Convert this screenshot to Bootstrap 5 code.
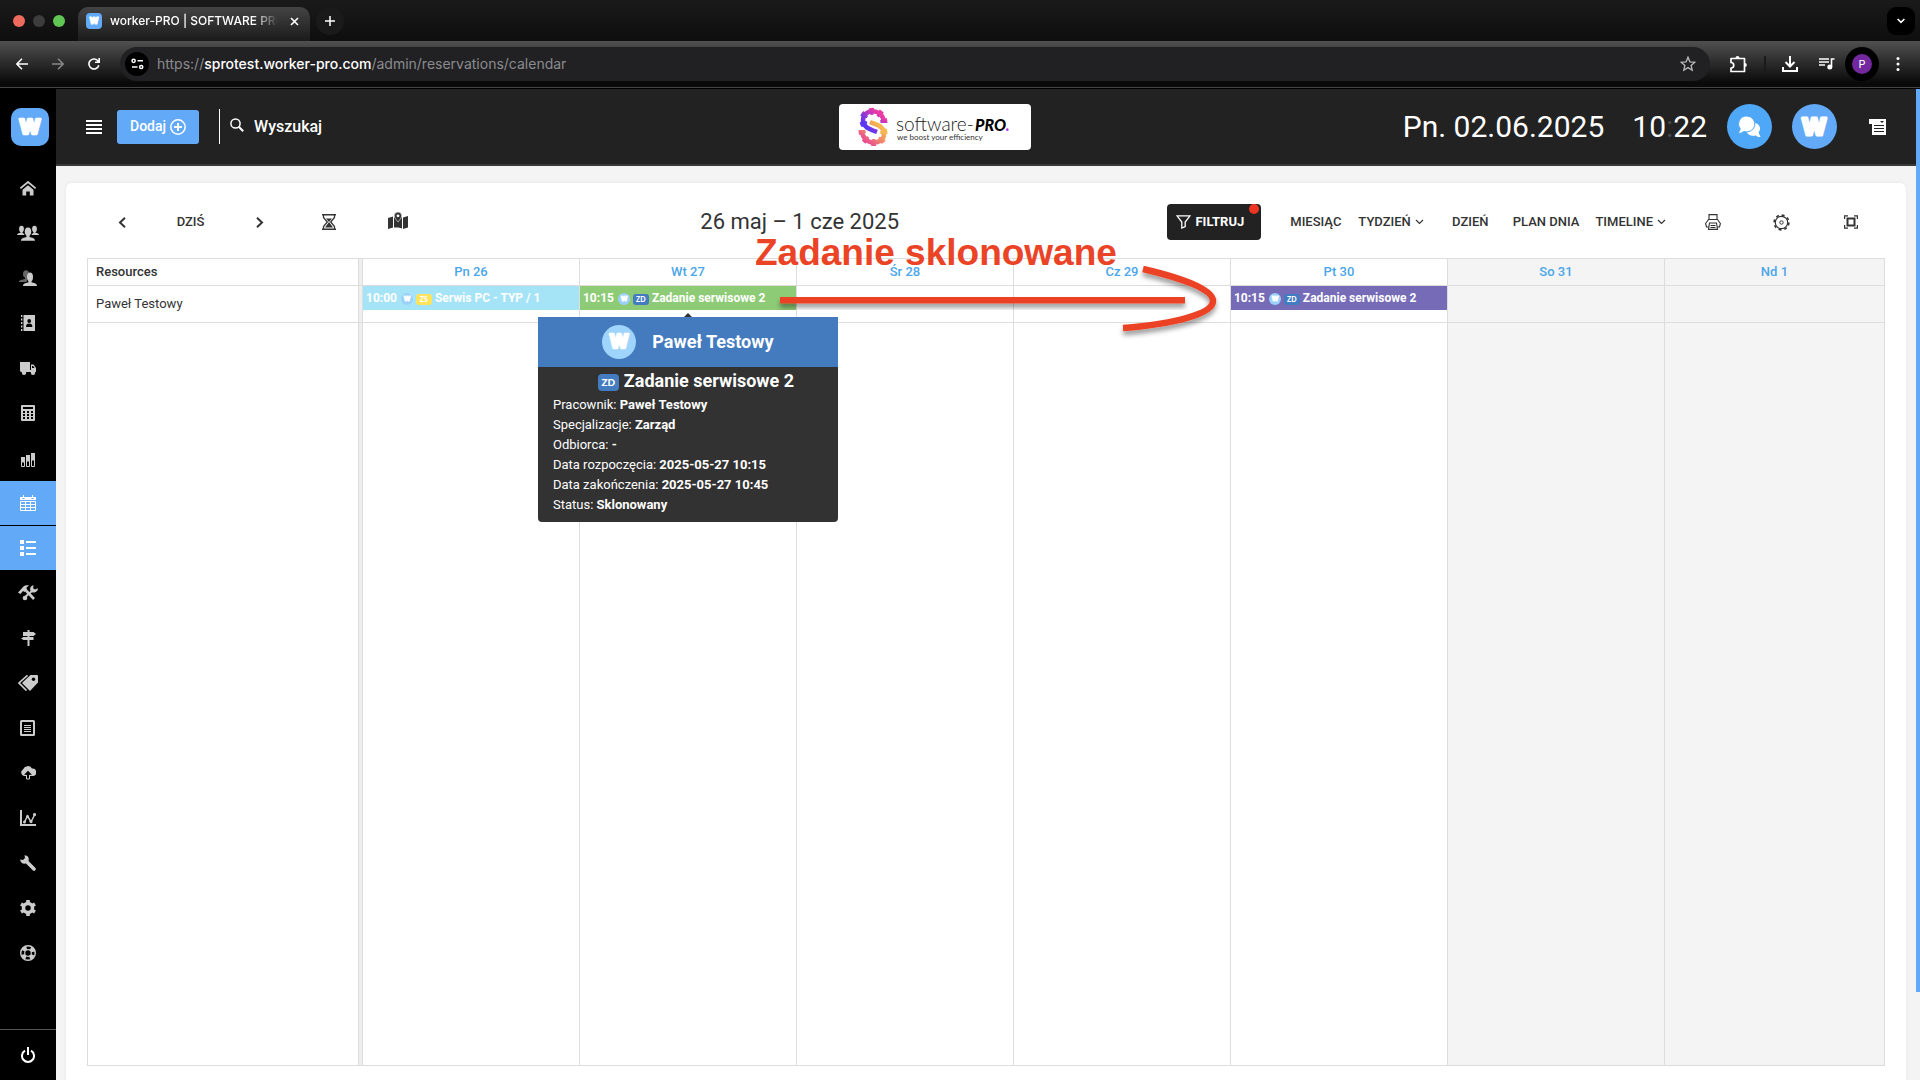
<!DOCTYPE html>
<html lang="pl">
<head>
<meta charset="utf-8">
<meta name="viewport" content="width=device-width, initial-scale=1">
<title>worker-PRO | SOFTWARE PRO</title>
<link rel="stylesheet" href="https://cdn.jsdelivr.net/npm/bootstrap@5.3.0/dist/css/bootstrap.min.css">
<style>
:root { --blue: #62a9f8; --dark: #222; --line: #ddd; }
body { font-family: Roboto, "Liberation Sans", sans-serif; font-size: 13px; line-height: 20px; color: #333; background: #f4f4f4; overflow: hidden; }
button { font: inherit; color: inherit; background: none; border: 0; padding: 0; }
svg { display: block; flex: none; }
a { text-decoration: none; color: inherit; }

/* browser window */
.browser { font-family: Inter, "Liberation Sans", sans-serif; color: #fff; background: #000; }
.tab-strip { height: 41px; background: linear-gradient(#1a1a1a, #0e0e0e); padding: 0 5px 0 13px; }
.light { width: 12px; height: 12px; border-radius: 50%; }
.light-close { background: #ec6a5e; }
.light-min { background: #3d3d3d; }
.light-max { background: #61c554; }
.browser-tab { width: 232px; height: 34px; margin-left: 13px; padding: 0 11px 6px 8px; border-radius: 10px 10px 0 0; background: linear-gradient(#444, #1b1b1b); }
.tab-title { font-size: 12px; font-weight: 500; white-space: nowrap; overflow: hidden; width: 168px; margin-left: 8px; -webkit-mask-image: linear-gradient(90deg, #000 85%, transparent); mask-image: linear-gradient(90deg, #000 85%, transparent); }
.new-tab { width: 28px; height: 28px; margin-left: 6px; border-radius: 50%; background: #1a1a1a; }
.tab-menu { width: 28px; height: 28px; border-radius: 9px; background: #000; }
.tool-strip { height: 48px; padding: 0 20px 2px 16px; background: linear-gradient(#505050, #090909 90%); border-bottom: 1px solid #000; box-shadow: inset 0 -1px #444, inset 0 -4px #0a0a0a; }
.address { height: 34px; border-radius: 17px; background: #212124; padding: 0 14px 0 5px; margin: 0 19px 0 20px; }
.site-info { width: 24px; height: 24px; border-radius: 50%; background: #000; }
.url { font-size: 14px; color: #8b8b8e; margin-left: 8px; white-space: nowrap; }
.url b { color: #fff; font-weight: 500; }
.tool-rule { width: 2px; height: 16px; background: #1b1b1b; margin: 0 16px 0 17px; }
.media { margin: 0 10px 0 21px; }
.profile { width: 34px; height: 34px; border-radius: 50%; background: #000; margin-right: 17px; }
.profile span { width: 20px; height: 20px; border-radius: 50%; background: #7428a0; font-size: 11px; }

/* side navigation */
.side { width: 56px; background: #000; color: #ccc; }
.side-logo { height: 77px; padding: 0 0 1px 4px; }
.side-logo svg { border-radius: 10px; }
.side-link { height: 44px; margin-bottom: 1px; display: flex; align-items: center; justify-content: center; }
.side-link.active { background: var(--blue); color: #fff; }
.side-exit { height: 51px; border-top: 1px solid #555; color: #fff; }
.w-tile { background: var(--blue); color: #fff; }

/* page header */
.top-head { height: 77px; background: var(--dark); border-bottom: 2px solid #393739; color: #fff; padding: 0 30px; }
.btn-add { --bs-btn-bg: #62a9f8; --bs-btn-hover-bg: #5199e8; --bs-btn-color: #fff; --bs-btn-hover-color: #fff; height: 34px; padding: 0 12px; font-size: 14px; font-weight: 500; border-radius: 3px; margin-left: 15px; }
.search-box { border-left: 1px solid #fff; height: 35px; padding-left: 10px; margin-left: 20px; }
.search-box input { width: 214px; margin-left: 10px; padding: 0; border: 0; background: none; color: #fff; font-size: 16px; font-weight: 500; outline: 0; }
.search-box input::placeholder { color: #fff; opacity: 1; }
.brand-pill { width: 192px; height: 46px; border-radius: 4px; background: #fff; }
.clock { font-size: 30px; line-height: 40px; }
.clock i { color: #484848; font-style: normal; }
.round { width: 45px; height: 45px; border-radius: 50%; margin-left: 20px; }
.chat { background: #4fa7f8; }
.thumb { width: 4px; height: 903px; right: 0; top: 0; background: var(--blue); z-index: 5; }

/* calendar */
.content { padding: 17px 10px 0; }
.panel { background: #fff; border-radius: 6px 6px 0 0; padding: 21px 21px 14px; box-shadow: 0 0 4px rgba(0,0,0,.06); }
.cal-bar { height: 36px; margin-bottom: 18px; font-weight: 500; }
.cal-btn { min-width: 69px; height: 36px; padding: 0 8px; display: flex; align-items: center; justify-content: center; gap: 4px; font-weight: 500; }
.cal-btn.has-menu { padding-right: 12px; }
.cal-title { font-size: 22px; line-height: 30px; font-weight: 400; margin: 0; }
.btn-filter { width: 94px; height: 36px; border-radius: 4px; background: var(--dark); color: #fff; font-weight: 700; gap: 4px; padding-right: 8px; margin-right: 20px; }
.btn-filter .dot { width: 10px; height: 10px; border-radius: 50%; background: #ee3524; top: 0; right: 2px; }
.cal-grid { table-layout: fixed; color: #333; border-color: var(--line); height: 100%; }
.cal-grid > :not(caption) > * > * { padding: 0; border: 1px solid var(--line); background: none; box-shadow: none; }
.cal-grid thead tr { height: 27px; }
.cal-grid th { font-weight: 500; line-height: 20px; vertical-align: middle; text-align: center; color: #4ba6ea; }
.cal-grid > :not(caption) > tr > .res { text-align: left; padding-left: 8px; color: #333; vertical-align: middle; }
.cal-grid > :not(caption) > tr > .split { background: #eee; }
.cal-grid > :not(caption) > tr > .off { background: #f4f4f4; }
.col-res { width: 271px; }
.col-split { width: 4px; }
.col-tail { width: 3px; }
.row-person { height: 37px; }
.event { height: 24px; padding: 0 3px 1px; font-size: 12px; font-weight: 700; color: #fff; white-space: nowrap; display: flex; align-items: center; }
.event-sky { background: #a5e4f7; }
.event-green { background: #8ecb76; }
.event-violet { background: #756bb7; }
.event .avatar { width: 12px; height: 12px; margin: 3px 3px 0 4px; border-radius: 50%; background: #9bd0fb; }
.code { border-radius: 4px; background: #437cc0; font-family: Lato, sans-serif; font-weight: 900; color: #fff; display: inline-flex; align-items: center; justify-content: center; }
.event .code { width: 16px; height: 11px; font-size: 7px; margin: 3px 3px 0 0; border-radius: 3px; }
.code-yellow { background: #fbe35b; }
.tip { top: 31px; left: 50%; width: 300px; margin-left: -150px; background: #323232; color: #fff; border-radius: 4px; z-index: 3; font-size: 13px; line-height: 20px; }
.tip::before { content: ""; position: absolute; top: -4px; left: 146px; border: 4px solid transparent; border-top: 0; border-bottom-color: #323232; }
.tip-head { height: 50px; background: #437bbe; font-size: 18px; font-weight: 700; gap: 16px; }
.tip-head .avatar { width: 34px; height: 34px; border-radius: 50%; background: #9fd4fc; }
.tip-name { font-size: 18px; font-weight: 700; line-height: 28px; gap: 5px; }
.tip-name .code { width: 21px; height: 17px; font-size: 10px; margin-top: 2px; }
.tip-body { padding: 0 15px 7px; }
.note { left: 669px; top: -30px; z-index: 4; }
</style>
</head>
<body class="vh-100 d-flex flex-column">
<svg width="0" height="0" class="position-absolute" aria-hidden="true">
  <symbol id="w" viewBox="0 0 32 32"><text x="16" y="22" text-anchor="middle" font-family="Inter" font-size="17" font-weight="800" fill="#fff" stroke="#fff" stroke-width="2.2" stroke-linejoin="round">W</text></symbol>
</svg>

<header class="browser">
  <div class="tab-strip d-flex align-items-end">
    <div class="d-flex align-self-center gap-2">
      <span class="light light-close"></span><span class="light light-min"></span><span class="light light-max"></span>
    </div>
    <div class="browser-tab d-flex align-items-center">
      <svg class="w-tile rounded-1" width="16" height="16"><use href="#w"/></svg>
      <span class="tab-title">worker-PRO | SOFTWARE PRO</span>
      <button class="ms-auto" aria-label="Zamknij kartę"><svg width="9" height="9" viewBox="0 0 9 9" stroke="#fff" stroke-width="1.6"><path d="M1 1l7 7M8 1L1 8"/></svg></button>
    </div>
    <button class="new-tab d-flex align-items-center justify-content-center align-self-center" aria-label="Nowa karta"><svg width="10" height="10" viewBox="0 0 10 10" stroke="#fff" stroke-width="1.5"><path d="M5 0v10M0 5h10"/></svg></button>
    <button class="tab-menu d-flex align-items-center justify-content-center align-self-center ms-auto" aria-label="Karty"><svg width="8" height="6" viewBox="0 0 8 6" fill="none" stroke="#fff" stroke-width="1.6"><path d="M.6 1L4 4.4 7.4 1"/></svg></button>
  </div>
  <div class="tool-strip d-flex align-items-center">
    <button aria-label="Wstecz"><svg width="12" height="12" viewBox="0 0 12 12" fill="none" stroke="#fff" stroke-width="1.5"><path d="M12 6H1M6 .8L.9 6 6 11.2"/></svg></button>
    <button class="ms-4" aria-label="Dalej"><svg width="12" height="12" viewBox="0 0 12 12" fill="none" stroke="#888" stroke-width="1.5"><path d="M0 6h11M6 .8L11.1 6 6 11.2"/></svg></button>
    <button class="ms-4" aria-label="Odśwież"><svg width="12" height="12" viewBox="0 0 12 12" fill="none" stroke="#fff" stroke-width="1.6"><path d="M10.8 7.2A5 5 0 1 1 9.6 2.5L11 4M11.2 0v4.2H7"/></svg></button>
    <div class="address d-flex align-items-center flex-grow-1">
      <span class="site-info d-flex align-items-center justify-content-center"><svg width="13" height="12" viewBox="0 0 13 12" fill="none" stroke="#fff" stroke-width="1.5"><circle cx="2.6" cy="2.8" r="1.6"/><path d="M6.5 2.8H12M1 9h5.5"/><circle cx="10.2" cy="9" r="1.6"/></svg></span>
      <span class="url flex-grow-1">https://<b>sprotest.worker-pro.com</b>/admin/reservations/calendar</span>
      <button aria-label="Zakładka"><svg width="16" height="16" viewBox="0 0 16 16" fill="none" stroke="#bbb" stroke-width="1.3"><path d="M8 1.2l1.9 4.6 4.9.4-3.7 3.2 1.1 4.8L8 11.6l-4.2 2.6 1.1-4.8L1.2 6.2l4.9-.4z"/></svg></button>
    </div>
    <button aria-label="Rozszerzenia"><svg width="18" height="18" viewBox="0 0 18 18"><path d="M2 3.500h13.500v13H2v-3.500a2.700 2.700 0 0 0 0-5.500z" fill="none" stroke="#fff" stroke-width="1.700" stroke-linejoin="round"/><path d="M6.500 3a2 2 0 0 1 4 0zM15.800 8a2 2 0 0 1 0 4z" fill="#fff"/></svg></button>
    <span class="tool-rule"></span>
    <button aria-label="Pobrane"><svg width="16" height="16" viewBox="0 0 16 16" fill="none" stroke="#fff" stroke-width="2"><path d="M8 0v10M3.500 6L8 10.500 12.500 6M1 11v4h14v-4"/></svg></button>
    <button class="media" aria-label="Multimedia"><svg width="16" height="14" viewBox="0 0 16 14"><path d="M0 2h10M0 5h10M0 8h6M12.500 10V2H15.500" fill="none" stroke="#fff" stroke-width="1.600"/><circle cx="10.800" cy="10" r="2.500" fill="#fff"/></svg></button>
    <button class="profile d-flex align-items-center justify-content-center"><span class="d-flex align-items-center justify-content-center">P</span></button>
    <button aria-label="Menu"><svg width="4" height="14" viewBox="0 0 4 14" fill="#fff"><circle cx="2" cy="1.600" r="1.500"/><circle cx="2" cy="7" r="1.500"/><circle cx="2" cy="12.400" r="1.500"/></svg></button>
  </div>
</header>

<div class="d-flex flex-grow-1 position-relative overflow-hidden">
  <nav class="side d-flex flex-column flex-shrink-0" aria-label="Menu główne">
    <a href="#" class="side-logo d-flex align-items-center justify-content-center" aria-label="worker-PRO"><svg class="w-tile" width="38" height="38"><use href="#w"/></svg></a>
    <a href="#" class="side-link" aria-label="Start"><svg width="16" height="15" viewBox="0 0 16 15" fill="currentColor"><path d="M8 4.200l5.500 4.600V14.500H9.800v-4H6.200v4H2.500V8.800z"/><path d="M.4 7.400L8 1l7.600 6.400" fill="none" stroke="currentColor" stroke-width="1.800"/></svg></a>
    <a href="#" class="side-link" aria-label="Klienci"><svg width="22" height="16" viewBox="0 0 22 16" fill="currentColor"><ellipse cx="4.500" cy="4" rx="2.400" ry="3.200"/><path d="M3.500 6h2v2l2 1v1H0c0-1.500 1.500-1.800 3.500-2.300z"/><ellipse cx="17.500" cy="4" rx="2.400" ry="3.200"/><path d="M18.500 6h-2v2l-2 1v1H22c0-1.500-1.500-1.800-3.500-2.300z"/><ellipse cx="11" cy="6.700" rx="3.800" ry="4.800" stroke="#000"/><path d="M9.500 10h3v2c2 .5 5.500 1 5.500 3.800H4C4 13 7.500 12.500 9.500 12z"/></svg></a>
    <a href="#" class="side-link" aria-label="Pracownicy"><svg width="18" height="16" viewBox="0 0 18 16" fill="currentColor"><g opacity=".5"><ellipse cx="7" cy="4" rx="3" ry="3.800"/><path d="M6 7h2v4l-1 1H0c0-2 3-2.500 6-3z"/></g><ellipse cx="11" cy="7" rx="3" ry="4.500"/><path d="M9.500 10h3v2.200c2 .6 5.500 1 5.500 3.800H4c0-2.800 3.500-3.200 5.500-3.800z"/></svg></a>
    <a href="#" class="side-link" aria-label="Kontakty"><svg width="14" height="16" viewBox="0 0 14 16" fill="currentColor"><path d="M2.500 0H14v16H2.500z"/><path d="M.7 0v16" stroke="currentColor" stroke-width="1.400" stroke-dasharray="2 1.500"/><circle cx="8.200" cy="6" r="1.900" fill="#000"/><path d="M5 12c0-2.500 1.200-3.400 3.200-3.400s3.200.9 3.200 3.400z" fill="#000"/></svg></a>
    <a href="#" class="side-link" aria-label="Flota"><svg width="16" height="13" viewBox="0 0 16 13" fill="currentColor"><path d="M0 0h10v10H1L0 9zM11 2.500h2.500L16 6v4h-5zM9 8h3v2H9z"/><circle cx="4" cy="10.700" r="2.200"/><circle cx="13" cy="10.700" r="2.200"/><path d="M12 4h1.200l1.300 2H12z" fill="#000"/></svg></a>
    <a href="#" class="side-link" aria-label="Kalkulator"><svg width="14" height="16" viewBox="0 0 14 16"><rect width="14" height="16" rx="1" fill="currentColor"/><path d="M2 3h10" stroke="#000" stroke-width="2"/><path d="M2 7h10M2 10h10M2 13h10" stroke="#000" stroke-width="2" stroke-dasharray="2 2"/></svg></a>
    <a href="#" class="side-link" aria-label="Raporty"><svg class="mt-1" width="14" height="14" viewBox="0 0 14 14"><path d="M0 4h4v5H0zM5 2h4v6H5zM10 0h4v7h-4z" fill="currentColor"/><path d="M.5 9h3v4.500h-3zM5.500 8h3v5.500h-3zM10.500 7h3v6.500h-3z" fill="none" stroke="currentColor"/></svg></a>
    <a href="#" class="side-link active" aria-label="Kalendarz"><svg width="16" height="16" viewBox="0 0 16 16"><path d="M0 2h16v3H0z" fill="#fff"/><path d="M3.500 0v4M12.500 0v4" stroke="#fff"/><path d="M2.500 3.500h2M11.500 3.500h2" stroke="#62a9f8"/><path d="M.5 6.500h15v9H.5zM0 9.500h16M0 12.500h16M5.500 6v10M10.500 6v10" fill="none" stroke="#fff"/></svg></a>
    <a href="#" class="side-link active" aria-label="Lista"><svg width="16" height="16" viewBox="0 0 16 16" fill="#fff"><path d="M0 0h4v4H0zM0 6h4v4H0zM0 12h4v4H0zM6 1h10v2H6zM6 7h10v2H6zM6 13h10v2H6z"/></svg></a>
    <a href="#" class="side-link" aria-label="Serwis"><svg width="20" height="16" viewBox="0 0 20 16" fill="currentColor"><path d="M0 7.500L5.500 1.500C7 .2 9 0 11 .5L8.500 2.500 9 5 6.500 7 5 6 2.500 9z"/><path d="M8 5.500L16 14" stroke="currentColor" stroke-width="2.600"/><path d="M14 6L6.500 12.500" stroke="currentColor" stroke-width="2"/><circle cx="7" cy="13" r="2.300"/><path d="M15.500.2c-3 .5-4 3.300-3 5.500s4.500 3 7.300-.7L19.500 3l-2 1.500-2.300-1z"/></svg></a>
    <a href="#" class="side-link" aria-label="Trasy"><svg width="15" height="16" viewBox="0 0 15 16" fill="currentColor"><path d="M6.500 0h2v16h-2zM2 2h10.500L15 4 12.500 6H2zM12.500 7v3h-10L0 8.500 2.500 7z"/></svg></a>
    <a href="#" class="side-link" aria-label="Cennik"><svg width="20" height="16" viewBox="0 0 20 16"><path d="M12.500 0H19.500L20 .5v7L12 16 4 8z" fill="currentColor"/><path d="M9.500.3L1 8l7.500 7.600" fill="none" stroke="currentColor" stroke-width="1.600"/><circle cx="15.500" cy="4.300" r="1.700" fill="#000"/></svg></a>
    <a href="#" class="side-link" aria-label="Dokumenty"><svg width="16" height="16" viewBox="0 0 16 16" fill="none" stroke="currentColor"><rect x="1" y="1" width="13" height="14" rx=".5" stroke-width="2"/><path d="M4 5.500h7M4 7.500h7M4 9.500h7M4 11.500h7"/></svg></a>
    <a href="#" class="side-link" aria-label="Chmura"><svg width="16" height="14" viewBox="0 0 16 14"><path d="M4 10a3.500 3.500 0 0 1-1-6.500A5 5 0 0 1 12 2.500a3.700 3.700 0 0 1 1 7.500z" fill="currentColor"/><path d="M8 4.800l4 4H9.700V13H6.300V8.800H4z" fill="#000"/><path d="M6.500 9v4h3V9" fill="none" stroke="currentColor"/></svg></a>
    <a href="#" class="side-link" aria-label="Wykresy"><svg width="16" height="16" viewBox="0 0 16 16" fill="none" stroke="currentColor"><path d="M1 0v15h15" stroke-width="2"/><path d="M4.500 12L7.500 6l3.500 6 4-8" stroke-width="1.500"/><g fill="currentColor" stroke="none"><circle cx="4.500" cy="12" r="1.500"/><circle cx="7.500" cy="6.500" r="1.500"/><circle cx="11" cy="11.500" r="1.500"/><circle cx="14.500" cy="4.500" r="1.600"/></g></svg></a>
    <a href="#" class="side-link" aria-label="Narzędzia"><svg width="16" height="16" viewBox="0 0 16 16"><path d="M5.500 5.500l8.500 8.500" stroke="currentColor" stroke-width="3.600" stroke-linecap="round"/><path d="M4.500.2L5 3 3 5 .2 4.500C.2 8 3.500 9.500 6.500 8.200L8.500 6C9.500 3 8 .2 4.500.2z" fill="currentColor"/></svg></a>
    <a href="#" class="side-link" aria-label="Ustawienia"><svg width="16" height="16" viewBox="0 0 16 16"><circle cx="8" cy="8" r="4.500" fill="none" stroke="currentColor" stroke-width="3.500"/><path d="M8 0v3M8 13v3M1 4l2.600 1.500M12.400 10.500L15 12M1 12l2.600-1.500M12.400 5.500L15 4" stroke="currentColor" stroke-width="3.600"/></svg></a>
    <a href="#" class="side-link" aria-label="Pomoc"><svg width="16" height="16" viewBox="0 0 16 16" fill="none" stroke="currentColor"><circle cx="8" cy="8" r="7.300" stroke-width="1.400"/><circle cx="8" cy="8" r="3.300" stroke-width="1.200"/><circle cx="8" cy="8" r="5.300" stroke-width="3.600" stroke-dasharray="4.300 4.025" stroke-dashoffset="-2"/></svg></a>
    <a href="#" class="side-link side-exit mt-auto mb-0" aria-label="Wyloguj"><svg width="14" height="16" viewBox="0 0 14 16" fill="none" stroke="currentColor" stroke-width="2"><path d="M4 3.700a6 6 0 1 0 6 0M7 0v8"/></svg></a>
  </nav>

  <div class="d-flex flex-column flex-grow-1 me-1">
    <div class="top-head d-flex align-items-center justify-content-between">
      <div class="d-flex align-items-center">
        <button aria-label="Zwiń menu"><svg width="16" height="14" viewBox="0 0 16 14" fill="#fff"><path d="M0 0h16v2H0zM0 4h16v2H0zM0 8h16v2H0zM0 12h16v2H0z"/></svg></button>
        <button class="btn btn-add d-flex align-items-center gap-1">Dodaj <svg width="16" height="16" viewBox="0 0 16 16" fill="none" stroke="#fff" stroke-width="1.500"><circle cx="8" cy="8" r="7.200"/><path d="M8 4v8M4 8h8" stroke-width="2"/></svg></button>
        <label class="search-box d-flex align-items-center"><svg class="mb-1" width="14" height="14" viewBox="0 0 14 14" fill="none" stroke="#fff" stroke-width="1.500"><circle cx="5.500" cy="5.500" r="4.600"/><path d="M8.800 8.800l4.400 4.400" stroke-width="2"/></svg><input type="text" placeholder="Wyszukaj" aria-label="Wyszukaj"></label>
      </div>
      <a href="#" class="brand-pill" aria-label="software-PRO"><svg width="192" height="46" viewBox="0 0 192 46">
        <defs><linearGradient id="g1" x1="0" y1="1" x2="1" y2="0"><stop offset=".2" stop-color="#5a35f5"/><stop offset=".8" stop-color="#e93aa6"/></linearGradient><linearGradient id="g2" x1="0" y1="1" x2="1" y2="0"><stop offset=".1" stop-color="#ea4a92"/><stop offset=".8" stop-color="#f5b84e"/></linearGradient></defs>
        <g fill="none" stroke-width="4.500"><path d="M45 19C45 4 24 4 24 16 24 23 30 25 38 28" stroke="url(#g1)"/><path d="M45 19C45 4 24 4 24 16 24 20 26 22 28 23.500" stroke="url(#g1)" stroke-width="7" stroke-dasharray="4 4.500"/><path d="M23 26C23 42 45 42 45 30 45 22 38 21 31 18" stroke="url(#g2)"/><path d="M23 26C23 42 45 42 45 30 45 26 43 24 41 22.500" stroke="url(#g2)" stroke-width="7" stroke-dasharray="4 4.500"/></g>
        <text x="57" y="27" font-family="Lato" font-weight="300" font-size="19" fill="#222">software-</text>
        <text x="136" y="27" font-family="Lato" font-weight="900" font-style="italic" font-size="16">PRO<tspan fill="#b13bea">.</tspan></text>
        <text x="58" y="36" font-family="Lato" font-size="8" fill="#333">we boost your efficiency</text></svg></a>
      <div class="d-flex align-items-center">
        <span class="clock">Pn. 02.06.2025</span><span class="clock ps-1 ms-4">10<i>:</i>22</span>
        <button class="round chat d-flex align-items-center justify-content-center" aria-label="Wiadomości"><svg width="23" height="22" viewBox="0 0 23 22"><path d="M20.500 16.500l2 4.500c-2 0-3.500-.5-4.500-1.500-5 1-9-1-9.500-4.500L17 7c5 1 6.500 6 3.500 9.500z" fill="#fff"/><path d="M9 0a8.500 8 0 1 1-3.500 15.500C4 17 2.500 17.500.3 17.300l2-4.300A8.300 8 0 0 1 9 0z" fill="#fff" stroke="#4fa7f8"/></svg></button>
        <button class="round w-tile" aria-label="Profil"><svg width="44" height="44"><use href="#w"/></svg></button>
        <button class="ps-2 ms-4" aria-label="Lista zadań"><svg width="17" height="16" viewBox="0 0 17 16"><path d="M0 0h17v16H3V5H0z" fill="#fff"/><path d="M5 6.500h10M5 9.500h10M5 12.500h10" stroke="#222"/><path d="M11 2h4l-2 2z" fill="#222"/></svg></button>
      </div>
    </div>

    <main class="content d-flex flex-column flex-grow-1">
      <section class="panel d-flex flex-column flex-grow-1">
        <div class="cal-bar d-flex align-items-center justify-content-between">
          <div class="d-flex">
            <button class="cal-btn" aria-label="Poprzedni"><svg width="8" height="11" viewBox="0 0 8 11" fill="none" stroke="#333" stroke-width="2"><path d="M7 .8L2 5.500l5 4.700"/></svg></button>
            <button class="cal-btn">DZIŚ</button>
            <button class="cal-btn" aria-label="Następny"><svg width="8" height="11" viewBox="0 0 8 11" fill="none" stroke="#333" stroke-width="2"><path d="M1 .8l5 4.700-5 4.700"/></svg></button>
            <button class="cal-btn" aria-label="Historia"><svg width="14" height="16" viewBox="0 0 14 16"><path d="M0 .7h14M0 15.300h14" stroke="#333" stroke-width="1.400"/><path d="M1.500 1v2.500L5.300 8l-3.800 4.500V15M12.500 1v2.500L8.700 8l3.800 4.500V15" fill="none" stroke="#333" stroke-width="1.300"/><path d="M4 4.500h6L7 8l4 5.500H3L7 8z" fill="#333"/></svg></button>
            <button class="cal-btn" aria-label="Mapa"><svg class="mb-1" width="20" height="17" viewBox="0 0 20 17" fill="#333"><path d="M0 6l5-1.500v11L0 17zM6 5.500l1-.5 3 5 3-5 1 .5v11l-3.500-1h-1L6 15.500zM15 5.500L20 4v11.500L15 17z"/><path d="M10 0a3.700 3.700 0 0 1 3.700 3.700C13.700 6 10 10 10 10S6.300 6 6.300 3.700A3.700 3.700 0 0 1 10 0z" stroke="#fff" stroke-width=".6"/><circle cx="10" cy="3.800" r="1.400" fill="#fff"/></svg></button>
          </div>
          <h1 class="cal-title">26 maj – 1 cze 2025</h1>
          <div class="d-flex">
            <button class="btn-filter position-relative d-flex align-items-center justify-content-center"><svg width="15" height="14" viewBox="0 0 15 14" fill="none" stroke="#fff" stroke-width="1.300"><path d="M1 .8h13L9.200 7v4.500L5.800 13V7z"/></svg>FILTRUJ<span class="dot position-absolute"></span></button>
            <button class="cal-btn">MIESIĄC</button>
            <button class="cal-btn has-menu">TYDZIEŃ<svg width="9" height="6" viewBox="0 0 9 6" fill="none" stroke="#333" stroke-width="1.200"><path d="M1 1l3.500 3.500L8 1"/></svg></button>
            <button class="cal-btn">DZIEŃ</button>
            <button class="cal-btn">PLAN DNIA</button>
            <button class="cal-btn has-menu">TIMELINE<svg width="9" height="6" viewBox="0 0 9 6" fill="none" stroke="#333" stroke-width="1.200"><path d="M1 1l3.500 3.500L8 1"/></svg></button>
            <button class="cal-btn" aria-label="Drukuj"><svg width="16" height="16" viewBox="0 0 16 16" fill="none" stroke="#333" stroke-width="1.100"><path d="M4 6V.6h8V6M4 13H1.500L.6 9.500 3.500 5.500h9l2.900 4-.9 3.500H12M4.500 9h7l1 6.400h-9zM5.500 11.500h5M5.500 13.500h5"/></svg></button>
            <button class="cal-btn" aria-label="Ustawienia"><svg width="17" height="17" viewBox="0 0 17 17" fill="none" stroke="#333"><circle cx="8.500" cy="8.500" r="6.200" stroke-width="1.200"/><circle cx="8.500" cy="8.500" r="7.400" stroke-width="1.600" stroke-dasharray="2.900 2.912"/><circle cx="8.500" cy="8.500" r="1.700"/></svg></button>
            <button class="cal-btn" aria-label="Pełny ekran"><svg width="14" height="14" viewBox="0 0 14 14" fill="none" stroke="#333"><path d="M3.500 3.500h7v7h-7z" stroke-width="2"/><path d="M.6 4V.9H4M10 .9h3.400V4M13.400 10v3.100H10M4 13.100H.6V10" stroke-width="1.200"/></svg></button>
          </div>
        </div>

        <div class="flex-grow-1 position-relative">
          <table class="table cal-grid mb-0">
            <colgroup><col class="col-res"><col class="col-split"><col span="7"><col class="col-tail"></colgroup>
            <thead><tr><th class="res">Resources</th><td class="split"></td><th>Pn 26</th><th>Wt 27</th><th>Śr 28</th><th>Cz 29</th><th>Pt 30</th><th class="off">So 31</th><th class="off" colspan="2">Nd 1</th></tr></thead>
            <tbody>
              <tr class="row-person"><td class="res">Paweł Testowy</td><td class="split"></td>
                <td><a href="#" class="event event-sky">10:00<svg class="avatar"><use href="#w"/></svg><span class="code code-yellow">ZS</span>Serwis PC - TYP / 1</a></td>
                <td><div class="position-relative"><a href="#" class="event event-green">10:15<svg class="avatar"><use href="#w"/></svg><span class="code">ZD</span>Zadanie serwisowe 2</a>
                  <div class="tip position-absolute" role="tooltip">
                    <div class="tip-head d-flex align-items-center justify-content-center"><svg class="avatar"><use href="#w"/></svg>Paweł Testowy</div>
                    <div class="tip-name d-flex align-items-center justify-content-center ps-3"><span class="code">ZD</span>Zadanie serwisowe 2</div>
                    <div class="tip-body">
                      <div>Pracownik: <b>Paweł Testowy</b></div><div>Specjalizacje: <b>Zarząd</b></div><div>Odbiorca: <b>-</b></div><div>Data rozpoczęcia: <b>2025-05-27 10:15</b></div><div>Data zakończenia: <b>2025-05-27 10:45</b></div><div>Status: <b>Sklonowany</b></div>
                    </div>
                  </div></div></td>
                <td></td><td></td>
                <td><a href="#" class="event event-violet">10:15<svg class="avatar"><use href="#w"/></svg><span class="code">ZD</span>Zadanie serwisowe 2</a></td>
                <td class="off"></td><td class="off" colspan="2"></td></tr>
              <tr><td></td><td class="split"></td><td></td><td></td><td></td><td></td><td></td><td class="off"></td><td class="off" colspan="2"></td></tr>
            </tbody>
          </table>
          <svg class="note position-absolute" width="480" height="120" viewBox="0 0 480 120">
            <defs><filter id="sh" x="-10%" y="-50%" width="120%" height="250%"><feDropShadow dx="0" dy="4" stdDeviation="2.500" flood-opacity=".4"/></filter></defs>
            <text x="-1" y="37" font-family="Liberation Sans, sans-serif" font-weight="700" font-size="37" fill="#eb4326">Zadanie sklonowane</text>
            <g fill="none" stroke="#eb4326" stroke-width="6.500"><path d="M24 69h405v6.500H24z" fill="#eb4326" stroke="none" filter="url(#sh)"/><path d="M387 41C430 51 457 62 457 73 457 86 418 96 367 100" filter="url(#sh)"/></g>
          </svg>
        </div>
      </section>
    </main>
  </div>
  <span class="thumb position-absolute"></span>
</div>
<script src="https://cdn.jsdelivr.net/npm/bootstrap@5.3.0/dist/js/bootstrap.bundle.min.js"></script>
</body>
</html>
